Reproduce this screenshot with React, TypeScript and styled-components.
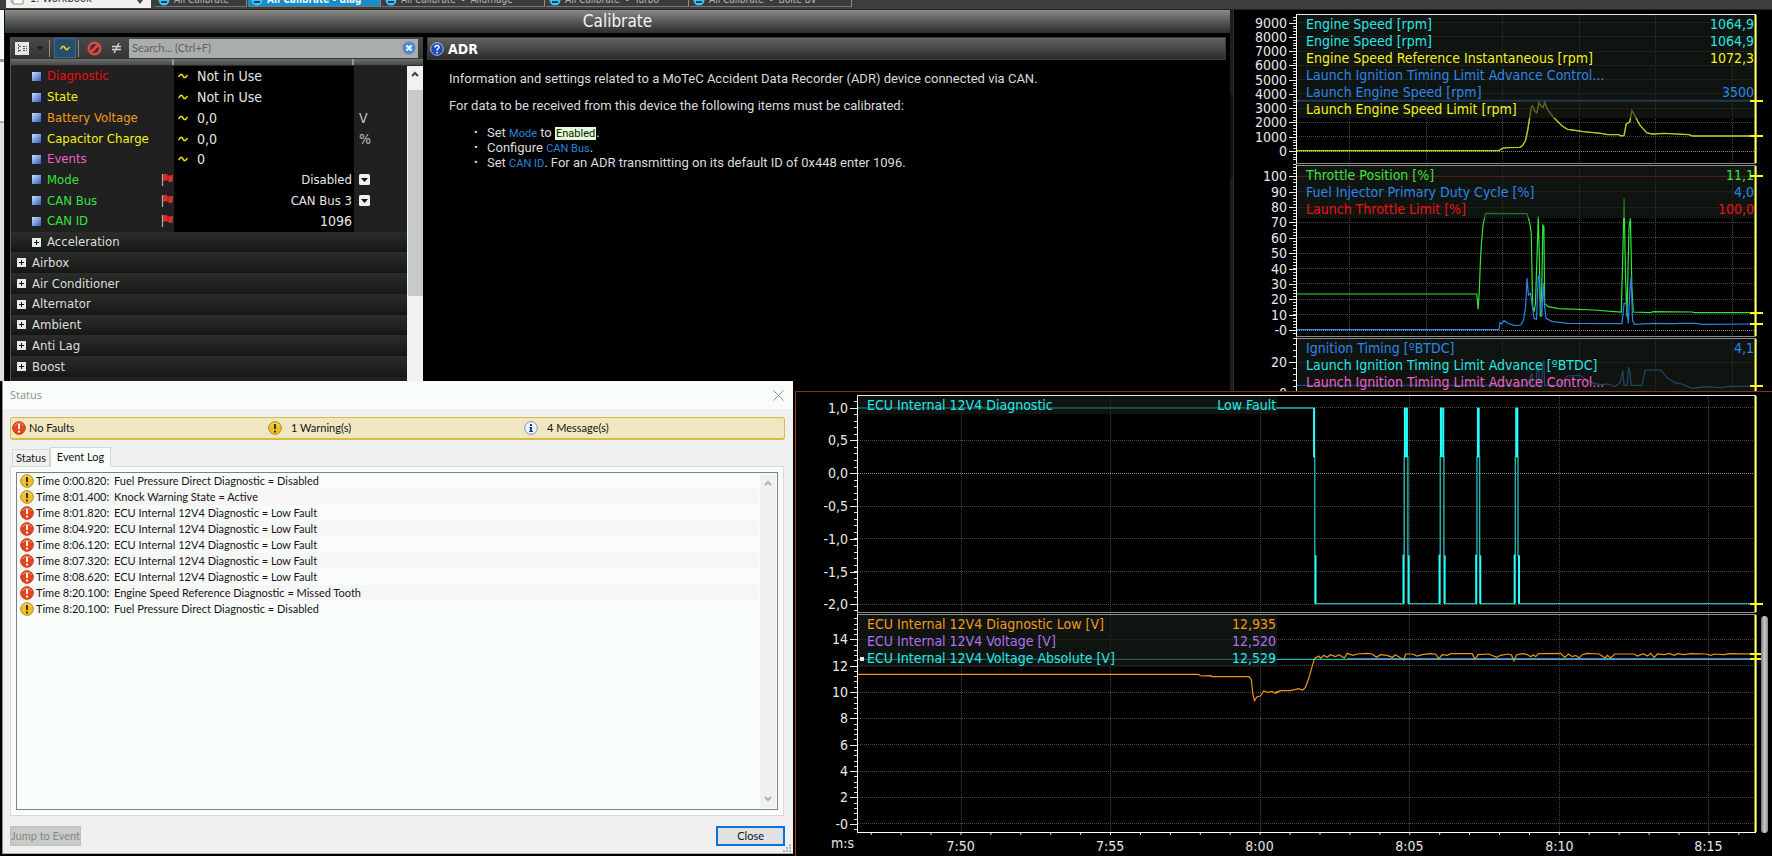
import React from "react";
import styled, { createGlobalStyle } from "styled-components";

const UI = '"DejaVu Sans Condensed", "DejaVu Sans", sans-serif';
const HELP = 'Roboto, "Liberation Sans", Arial, sans-serif';
const DIALOG = 'Lato, "Liberation Sans", sans-serif';

const GlobalStyle = createGlobalStyle`
  * { box-sizing: border-box; }
  body { margin: 0; background: #000; overflow: hidden; }
  button, input, select { font: inherit; color: inherit; margin: 0; padding: 0; border: 0; background: none; }
`;

const C = {
  cyan: "#27e6e6",
  yellow: "#f2f21c",
  blue: "#2b86e6",
  green: "#35e43c",
  red: "#f20d0d",
  pink: "#ee5fc8",
  orange: "#f09a1c",
  purple: "#b070f0",
  paper: "#f8fdf9",
};

/* ---------- shell ---------- */

const Desktop = styled.div`
  position: relative;
  display: flex;
  flex-direction: column;
  min-height: 100vh;
  background: #000;
  font: 14px/20px ${UI};
  color: #e4e6e4;
`;

const TabStrip = styled.nav`
  display: flex;
  height: 9px;
  flex: none;
  overflow: hidden;
  padding-left: 6px;
  gap: 1px;
  background: #3e3e3e;
`;

const WorkbookTab = styled.button`
  display: flex;
  align-items: flex-end;
  gap: 6px;
  width: 145px;
  height: 8px;
  margin-right: 3px;
  padding: 0 8px 3px 4px;
  background: #f0f0f0;
  color: #333;
  font: 11px/12px ${UI};
  span { flex: 1; text-align: left; }
`;

const SheetTab = styled.button<{ $w: number; $active?: boolean }>`
  display: flex;
  align-items: flex-end;
  gap: 4px;
  width: ${(p) => p.$w}px;
  height: 7px;
  padding: 0 0 0 3px;
  border-right: 1px solid #8a8c8a;
  border-bottom: 1px solid #777;
  background: ${(p) => (p.$active ? "#1a8cc6" : "#3a3c3a")};
  color: ${(p) => (p.$active ? "#e8f6ff" : "#b4b6b4")};
  font: ${(p) => (p.$active ? "bold" : "normal")} 10px/12px ${UI};
  white-space: pre;
  svg { flex: none; }
`;

const Workspace = styled.div`
  display: flex;
  height: 382px;
  border-top: 1px solid #222;
`;

const CalibrateWindow = styled.main`
  flex: 1230 1 0;
  min-width: 0;
  display: grid;
  grid-template-columns: 5px 1fr;
`;

const EdgeStrip = styled.div`
  background: linear-gradient(#f4faf6 0 49px, #999 49px 52px, #f4faf6 52px 111px, #aaa 111px 113px, #dcdcdc 113px);
  border-right: 1px solid #111;
  height: 371px;
`;

const WindowBody = styled.div`
  display: flex;
  flex-direction: column;
  min-width: 0;
`;

const WindowTitle = styled.h1`
  margin: 0 0 4px;
  height: 23px;
  text-align: center;
  font: 17px/23px ${UI};
  color: #f4f4f4;
  background: linear-gradient(#8a8b89, #5c5e5b 45%, #2c2e2c);
`;

const Panes = styled.div`
  display: flex;
  flex: 1;
  gap: 4px;
  padding: 0 4px 0 5px;
`;

const TreePane = styled.section`
  width: 413px;
  border-left: 1px solid #555;
  background: #202020;
`;

const Toolbar = styled.div`
  display: flex;
  align-items: center;
  height: 22px;
  background: linear-gradient(#474a48, #333634);
`;

const ToolButton = styled.button<{ $w: number; $on?: boolean }>`
  display: flex;
  align-items: center;
  justify-content: center;
  width: ${(p) => p.$w}px;
  height: 20px;
  border: ${(p) => (p.$on ? "1px solid #2d6da2" : "0")};
  background: ${(p) => (p.$on ? "#2a4d68" : "none")};
`;

const Divider = styled.i`
  width: 1px;
  height: 17px;
  margin: 0 4px 0 2px;
  background: #8b8e8b;
`;

const SearchBox = styled.label`
  display: flex;
  align-items: center;
  flex: 1;
  height: 19px;
  margin: 0 5px 0 2px;
  padding: 0 2px 0 3px;
  background: #aaaeaa;
  input {
    flex: 1;
    min-width: 0;
    font: 11px/18px ${DIALOG};
    outline: 0;
    &::placeholder { color: #5e625f; opacity: 1; }
  }
`;

const ColumnHeads = styled.div`
  display: grid;
  grid-template-columns: 163px 180px 1fr;
  height: 7px;
  background: linear-gradient(#6c6e6c, #484a48);
  border-bottom: 1px solid #2c2c2c;
  i { border-right: 2px solid #989a98; }
  i:last-child { border: 0; }
`;

const TreeBody = styled.div`
  display: flex;
  height: 315px;
`;

const TreeTable = styled.table`
  flex: 1;
  table-layout: fixed;
  height: 311px;
  border-spacing: 0;
  font-size: 13px;
  td { padding: 0; height: 20px; line-height: 20px; }
`;

const NameCell = styled.td<{ $color: string }>`
  color: ${(p) => p.$color};
  > div { display: flex; align-items: center; padding-left: 21px; gap: 6px; }
  > div > span { flex: 1; }
`;

const ValueCell = styled.td`
  background: #000;
  > div { display: flex; align-items: center; gap: 9px; padding: 0 2px 0 4px; }
  > div > span, select { flex: 1; }
  select {
    appearance: none;
    text-align-last: right;
    line-height: 20px;
    height: 20px;
    option { color: #000; }
  }
`;

const LiveValue = styled.span`
  font-size: 14px;
`;

const RightText = styled.span`
  text-align: right;
  font-size: 14px;
`;

const UnitCell = styled.td`
  padding-left: 5px !important;
  color: #c4c6c4;
  font-size: 14px;
  svg { display: block; }
`;

const GroupCell = styled.td<{ $nested?: boolean }>`
  background: linear-gradient(#2b2d2b, #202220 55%, #141714);
  > button {
    display: flex;
    align-items: center;
    gap: 6px;
    padding-left: ${(p) => (p.$nested ? 21 : 6)}px;
    color: #dcdedc;
  }
`;

const ScrollTrack = styled.div`
  display: flex;
  flex-direction: column;
  width: 16px;
  background: #f0f1f0;
  svg { display: block; margin: 5px auto 13px; }
  i { height: 206px; background: #c7cbc8; margin-left: 1px; }
`;

const HelpPane = styled.section`
  flex: 1;
  min-width: 0;
  font: 13px/15px ${HELP};
  color: #dadcda;
`;

const HelpHead = styled.h2`
  display: flex;
  align-items: center;
  gap: 4px;
  height: 23px;
  margin: 0 0 11px;
  padding-left: 2px;
  font: bold 14px/22px ${UI};
  color: #fff;
  background: linear-gradient(#60625f, #464846 50%, #2a2c2a);
  border: 1px solid #3a3a3a;
`;

const HelpText = styled.div`
  padding-left: 22px;
  p { margin: 0 0 12px; }
  ul { margin: 0; padding-left: 38px; list-style: none; }
  li { position: relative; height: 15px; white-space: nowrap; }
  li::before { content: "•"; position: absolute; left: -13px; font-size: 11px; }
  a { color: #2a86dc; font-size: 11px; line-height: 12px; text-decoration: none; }
  mark { background: #e2fcd4; color: #111; font-size: 11px; line-height: 12px; padding: 0 1px; }
`;

const Splitter = styled.div`
  width: 4px;
  background: linear-gradient(#1c1e1c 0 84px, #111 84px 169px, #1c1e1c 169px);
  border-right: 1px solid #2c2e2c;
`;

/* ---------- graphs ---------- */

const UpperGraphs = styled.section`
  flex: 538 1 0;
  min-width: 0;
  padding-top: 4px;
`;

const PanelRow = styled.div<{ $axis: number; $h: number }>`
  display: grid;
  grid-template-columns: ${(p) => p.$axis}px minmax(0, 1fr) 16px;
  grid-template-rows: minmax(0, 1fr);
  height: ${(p) => p.$h}px;
`;

const AxisSvg = styled.svg`
  display: block;
  width: 100%;
  height: 100%;
  text { font: 14px ${UI}; fill: #e6e8e6; text-anchor: end; }
`;

const Plot = styled.div<{ $first?: boolean; $last?: boolean }>`
  position: relative;
  min-height: 0;
  border-left: 1px solid #fff;
  border-top: ${(p) => (p.$first ? "1px solid #e8e8e8" : "3px double #8c8e8c")};
  border-bottom: ${(p) => (p.$last ? "1px solid #fff" : "0")};
`;

const TraceSvg = styled.svg`
  display: block;
  width: 100%;
  height: 100%;
  * { vector-effect: non-scaling-stroke; fill: none; }
`;

const Legend = styled.div<{ $w: string }>`
  position: absolute;
  top: 0;
  left: 1px;
  width: ${(p) => p.$w};
  padding: 0 1px 1px 8px;
  background: rgba(27, 33, 29, 0.6);
`;

const LegendRow = styled.div<{ $color: string }>`
  display: flex;
  justify-content: space-between;
  height: 17px;
  line-height: 18px;
  white-space: nowrap;
  color: ${(p) => p.$color};
`;

const Cursor = styled.i`
  position: absolute;
  top: 0;
  bottom: 0;
  right: -1px;
  width: 3px;
  background: linear-gradient(90deg, #8c8c14 0 1px, #ffff8c 1px 2px, #a0a050 2px);
`;

const LevelMarks = styled.svg`
  position: absolute;
  top: 0;
  right: -7px;
  width: 13px;
  height: 100%;
`;

const Selected = styled.i`
  position: absolute;
  left: 2px;
  top: 42px;
  width: 4px;
  height: 4px;
  background: #e8e8e8;
`;

interface Trace { color: string; d: string; w?: number }
interface PanelProps {
  axis: number;
  h: number;
  /* source window of the traces: x, y, width, height */
  box: [number, number, number, number];
  gridX: number[];
  ticks: [string, number][];
  minor: number;
  zero?: number;
  traces: Trace[];
  legend: [string, string, string][];
  legendW?: string;
  marks?: number[];
  first?: boolean;
  last?: boolean;
  selected?: boolean;
}

function Panel(p: PanelProps) {
  const [bx, by, bw, bh] = p.box;
  const top = p.first ? 1 : 3;
  const toPx = (y: number) => (y - by) / 3 + top;
  const ys = p.ticks.map((t) => toPx(t[1]));
  const minors: number[] = [];
  for (let y = ys[0]; y > 1; y -= p.minor) minors.push(y);
  for (let y = ys[0] + p.minor; y < p.h - 1; y += p.minor) minors.push(y);
  return (
    <PanelRow $axis={p.axis} $h={p.h}>
      <AxisSvg>
        {minors.map((y, i) => (
          <rect key={i} x={p.axis - 3} y={Math.round(y)} width={3} height={1} fill="#d8d8d8" />
        ))}
        {p.ticks.map(([label], i) => (
          <g key={i}>
            <rect x={p.axis - 7} y={Math.round(ys[i])} width={7} height={1} fill="#e8e8e8" />
            <text x={p.axis - 9} y={Math.round(ys[i]) + 5}>{label}</text>
          </g>
        ))}
      </AxisSvg>
      <Plot $first={p.first} $last={p.last}>
        <TraceSvg viewBox={`${bx} ${by} ${bw} ${bh}`} preserveAspectRatio="none">
          <g stroke="#454745" strokeDasharray="1 1" shapeRendering="crispEdges">
            {p.gridX.map((x) => <line key={x} x1={x} x2={x} y1={by} y2={by + bh} />)}
            {p.ticks.map(([, y]) => (
              <line key={y} x1={bx} x2={bx + bw} y1={y} y2={y} stroke={y === p.zero ? "#8c8e8c" : undefined} />
            ))}
          </g>
          {p.traces.map((t, i) => (
            <polyline key={i} points={t.d} stroke={t.color} strokeWidth={t.w ?? 1} />
          ))}
        </TraceSvg>
        <Legend $w={p.legendW ?? "calc(100% - 2px)"}>
          {p.legend.map(([name, value, color], i) => (
            <LegendRow key={i} $color={color}><span>{name}</span><span>{value}</span></LegendRow>
          ))}
        </Legend>
        {p.selected && <Selected />}
        <Cursor />
        <LevelMarks>
          {p.marks?.map((y) => (
            <rect key={y} y={Math.round((y - by) / 3) - 1} width={13} height={2} fill="#ffff10" />
          ))}
        </LevelMarks>
      </Plot>
    </PanelRow>
  );
}

const UX = [366, 584, 799, 1019, 1235, 1453];
const LX = [544, 992, 1439, 1888, 2337, 2783];
const scale = (labels: string[], y0: number, y1: number): [string, number][] =>
  labels.map((l, i) => [l, y0 + ((y1 - y0) * i) / (labels.length - 1)]);

const RPM = "216,452 790,452 800,445 812,443 850,442 858,436 866,420 872,390 878,350 882,322 886,318 892,334 898,338 904,308 910,318 916,322 920,306 928,328 945,352 970,378 985,388 1000,390 1030,395 1080,400 1100,404 1130,404 1138,408 1146,406 1152,372 1162,366 1168,332 1176,346 1190,374 1210,398 1225,402 1260,400 1330,404 1340,408 1521,408";
const THROTTLE = "216,402 727,402 731,448 734,400 737,315 740,255 745,195 752,160 870,161 878,190 882,220 884,330 886,440 890,455 894,430 898,300 902,168 905,290 908,470 912,380 915,195 918,200 920,430 930,440 960,446 1060,450 1110,454 1138,456 1142,300 1146,115 1150,350 1154,470 1160,200 1164,175 1168,380 1172,456 1220,458 1230,455 1340,456 1345,458 1521,458";
const DUTY = "216,509 790,509 793,488 797,492 805,482 815,490 835,497 852,495 860,480 866,440 870,355 874,405 880,400 884,430 890,475 897,478 902,350 905,345 908,440 912,470 916,370 920,440 924,475 940,484 985,490 1140,491 1146,430 1152,430 1158,490 1162,400 1166,350 1170,480 1175,493 1230,490 1290,491 1310,490 1350,490 1370,493 1521,492";
const IGNITION = "216,676 870,676 880,650 884,640 886,676 896,676 898,625 903,620 905,676 912,676 914,610 918,605 920,676 960,676 985,648 1020,646 1040,660 1060,670 1080,674 1100,672 1120,680 1135,668 1142,632 1146,676 1155,676 1159,622 1163,640 1166,676 1196,676 1206,630 1250,630 1270,655 1290,668 1310,672 1340,685 1380,680 1420,683 1450,679 1521,679";
const DIAG_LOW_A = "234,883 1254,883 1262,888 1292,887 1294,890 1406,890 1413,900 1417,940 1422,962 1430,950 1440,948 1450,933 1462,937 1475,934 1485,940 1498,934";
const DIAG_LOW_B: [number, number][] = [[14,938],[30,932],[60,932],[85,926],[97,930],[105,922],[115,895],[125,860],[132,836],[145,828],[150,835],[160,826],[170,832],[180,824],[195,830],[205,824],[222,834],[230,820],[248,826],[260,822],[290,820],[305,822],[318,832],[330,824],[350,826],[365,832],[375,824],[390,834],[400,840],[405,822],[425,822],[440,828],[455,824],[478,821],[495,822],[505,836],[515,824],[530,826],[540,821],[605,821],[613,838],[622,824],[655,822],[678,832],[690,826],[712,822],[722,824],[730,842],[738,824],[755,821],[768,823],[780,830],[788,824],[795,830],[803,821],[870,820],[882,832],[893,822],[905,830],[915,826],[925,834],[935,824],[948,820],[985,822],[1003,834],[1010,826],[1020,834],[1032,822],[1090,822],[1100,828],[1118,821],[1130,828],[1140,820],[1150,832],[1160,822],[1180,824],[1195,820],[1210,826],[1220,821],[1240,824],[1260,821],[1305,822],[1320,826],[1330,822],[1360,824],[1375,821],[1455,822]];
const DIAG_LOW = DIAG_LOW_A + " " + DIAG_LOW_B.map(([x, y]) => `${x + 1470},${y}`).join(" ");

/* Fault line: drops once, then four short pulses back to 1,0. */
const PULSES = [
  [1869, 1871, 1873, 1879, 1882, 1884],
  [1977, 1979, 1981, 1988, 1990, 1992],
  [2087, 2089, 2092, 2094, 2097, 2099],
  [2202, 2204, 2207, 2210, 2212, 2215],
];
const FAULT = "234,84 1601,84 1601,231 1603,231 1603,527 1605,527 1605,671 " +
  PULSES.map(([a, b, c, d, e, f]) =>
    `${a},671 ${a},525 ${b},525 ${b},231 ${c},231 ${c},84 ${d},84 ${d},231 ${e},231 ${e},527 ${f},527 ${f},671`).join(" ") +
  " 2925,671";
const FAULT_BRIGHT = ["1601,84 1601,231", "1605,527 1605,671"].concat(
  PULSES.flatMap(([a, , c, d, , f]) => [`${a},525 ${a},671`, `${c},84 ${c},231`, `${d},84 ${d},231`, `${f},527 ${f},671`])
);

/* ---------- lower windows ---------- */

const LowerLayer = styled.div`
  position: absolute;
  top: 381px;
  left: 0;
  right: 0;
  bottom: 0;
  display: flex;
  align-items: flex-start;
  gap: 2px;
  padding-left: 2px;
`;

const GraphWindow = styled.section`
  flex: 977 1 0;
  min-width: 0;
  align-self: stretch;
  margin-top: 10px;
  padding-top: 3px;
  background: #000;
  border-left: 1px solid #a2400f;
  border-top: 1px solid #8a340a;
  position: relative;
`;

const GraphScroll = styled.i`
  position: absolute;
  right: 4px;
  top: 224px;
  width: 7px;
  height: 217px;
  border-radius: 4px;
  background: linear-gradient(90deg, #777, #c8cac8 50%, #888);
`;

const TimeAxis = styled.div`
  display: grid;
  grid-template-columns: 61px minmax(0, 1fr) 16px;
  height: 23px;
  span { padding: 0 3px 0 0; text-align: right; line-height: 20px; }
  svg { display: block; width: 100%; height: 23px; overflow: visible; }
  text { font: 14px ${UI}; fill: #e6e8e6; text-anchor: middle; }
`;

const Dialog = styled.section`
  flex: 791 1 0;
  min-width: 0;
  display: flex;
  flex-direction: column;
  height: 473px;
  background: #f0f0f0;
  border-left: 1px solid #8c8c8c;
  border-bottom: 1px solid #aaa;
  color: #151515;
  font: 11px/16px ${DIALOG};
  position: relative;
`;

const DialogTitle = styled.header`
  display: flex;
  align-items: center;
  justify-content: space-between;
  height: 28px;
  padding: 0 9px 0 7px;
  background: ${C.paper};
  color: #8d918e;
  h2 { margin: 0; font: 11px/26px "Open Sans", sans-serif; }
  button { display: flex; }
`;

const Banner = styled.div`
  display: grid;
  grid-template-columns: 256px 256px 1fr;
  align-items: center;
  height: 23px;
  margin: 8px 8px 7px 7px;
  padding-left: 1px;
  background: #f0e7c0;
  border: 1px solid #d9b94a;
  border-bottom-width: 2px;
  border-radius: 3px;
  div { display: flex; align-items: center; gap: 3px; }
  div + div { gap: 9px; }
`;

const Tabs = styled.div`
  display: flex;
  align-items: flex-end;
  height: 20px;
  margin-bottom: -1px;
  padding-left: 9px;
  position: relative;
`;

const Tab = styled.button<{ $active?: boolean }>`
  height: ${(p) => (p.$active ? 20 : 18)}px;
  width: ${(p) => (p.$active ? 61 : 38)}px;
  border: 1px solid #d5d8d5;
  border-bottom-color: ${(p) => (p.$active ? C.paper : "#d5d8d5")};
  background: ${(p) => (p.$active ? C.paper : "#f0f0f0")};
  white-space: nowrap;
`;

const TabPage = styled.div`
  height: 350px;
  margin: 0 9px 0 7px;
  padding: 5px;
  border: 1px solid #d5d8d5;
  background: ${C.paper};
`;

const LogBox = styled.div`
  display: flex;
  height: 338px;
  border: 1px solid #7c8088;
  background: ${C.paper};
`;

const LogTable = styled.table`
  flex: 1;
  align-self: flex-start;
  border-spacing: 0;
  table-layout: fixed;
  td { padding: 0; height: 16px; line-height: 16px; white-space: nowrap; }
  tr:nth-child(even) { background: #f7f6f7; }
  svg { display: block; margin-left: 3px; }
`;

const LogScroll = styled.div`
  display: flex;
  flex-direction: column;
  justify-content: space-between;
  align-items: center;
  width: 16px;
  margin: 1px;
  padding: 6px 0;
  background: #f0f0f0;
`;

const DialogFooter = styled.footer`
  display: flex;
  justify-content: space-between;
  margin: 10px 8px 0 7px;
`;

const FooterButton = styled.button<{ $w: number }>`
  width: ${(p) => p.$w}px;
  height: 20px;
  background: #e1e1e1;
  border: 2px solid #0a74d4;
  white-space: nowrap;
  &:disabled { background: #c7cac7; border: 1px solid #bdc0bd; color: #858885; }
`;

const Grip = styled.svg`
  position: absolute;
  right: 2px;
  bottom: 1px;
`;

/* ---------- icons ---------- */

const StatusIcon = ({ kind }: { kind: "fault" | "warn" | "info" }) => {
  const fill = kind === "fault" ? "#e8441c" : kind === "warn" ? "#f0c020" : "#eef4fb";
  const ring = kind === "fault" ? "#b5401e" : kind === "warn" ? "#a88c20" : "#7f97b8";
  const ink = kind === "fault" ? "#fff" : kind === "warn" ? "#333" : "#1c3c94";
  return (
    <svg width="14" height="14" viewBox="0 0 14 14" aria-hidden="true">
      <circle cx="7" cy="7" r="6.3" fill={fill} stroke={ring} />
      <path d="M2.5 5 A5 5 0 0 1 11.500 5" fill="none" stroke="#fff" strokeOpacity=".4" />
      {kind === "info"
        ? <path d="M6 3h2v2H6zM5.500 6H8v4h1v1H5v-1h1V7h-.5z" fill={ink} />
        : <path d="M6 3h2v5H6zM6 9.500h2v2H6z" fill={ink} />}
    </svg>
  );
};

const Wave = () => (
  <svg width="10" height="8" viewBox="0 0 10 8" aria-hidden="true">
    <path d="M.5 5 2.500 2.500 4 2.500 6 5.500 7.500 5.500 9.500 3" fill="none" stroke="#f0e010" strokeWidth="1.4" />
  </svg>
);

const Cube = () => (
  <svg width="9" height="9" aria-hidden="true">
    <defs><linearGradient id="cube" x2="1" y2="1"><stop stopColor="#cfe0ff" /><stop offset="1" stopColor="#2a5cc0" /></linearGradient></defs>
    <rect width="9" height="9" fill="url(#cube)" />
  </svg>
);

const Plus = () => (
  <svg width="9" height="9" aria-hidden="true">
    <rect width="9" height="9" fill="#e6eaee" /><path d="M2 4.500h5M4.500 2v5" stroke="#111" />
  </svg>
);

const Flag = () => (
  <svg width="13" height="14" viewBox="0 0 13 14" aria-hidden="true">
    <path d="M1.500 1v12" stroke="#aaa" strokeWidth="1.200" />
    <path d="M2 1.500c2-1.500 3.500-.5 5 .5 1.500 1 3 .5 5-.5l-.5 7c-2 1-3 .5-4.500-.5S4 7 2 8.500z" fill="#d83028" />
    <path d="M7 2v6" stroke="#a01c18" strokeWidth="1" />
  </svg>
);

const Drop = () => (
  <svg width="11" height="11" aria-hidden="true">
    <rect width="11" height="11" rx="1.500" fill="#ecefec" /><path d="M2 4h7L5.500 8z" fill="#111" />
  </svg>
);

const Sheet = () => (
  <svg width="12" height="12" aria-hidden="true"><circle cx="6" cy="6" r="5.500" fill="#3fc4ee" /><path d="M3 8h6" stroke="#114" strokeWidth="1.500" /></svg>
);

const Chevron = ({ up, color, w = 2 }: { up?: boolean; color: string; w?: number }) => (
  <svg width="8" height="6" viewBox="0 0 8 6" aria-hidden="true">
    <path d={up ? "M1 5 4 2 7 5" : "M1 1 4 4 7 1"} fill="none" stroke={color} strokeWidth={w} />
  </svg>
);

/* ---------- data ---------- */

const LIVE = [
  ["Diagnostic", C.red, "Not in Use", ""],
  ["State", C.yellow, "Not in Use", ""],
  ["Battery Voltage", C.orange, "0,0", "V"],
  ["Capacitor Charge", C.yellow, "0,0", "%"],
  ["Events", C.pink, "0", ""],
];
const GROUPS = ["Acceleration", "Airbox", "Air Conditioner", "Alternator", "Ambient", "Anti Lag", "Boost"];
const LOW = "ECU Internal 12V4 Diagnostic = Low Fault";
const EVENTS: ["warn" | "fault", string, string][] = [
  ["warn", "0:00.820", "Fuel Pressure Direct Diagnostic = Disabled"],
  ["warn", "8:01.400", "Knock Warning State = Active"],
  ["fault", "8:01.820", LOW],
  ["fault", "8:04.920", LOW],
  ["fault", "8:06.120", LOW],
  ["fault", "8:07.320", LOW],
  ["fault", "8:08.620", LOW],
  ["fault", "8:20.100", "Engine Speed Reference Diagnostic = Missed Tooth"],
  ["warn", "8:20.100", "Fuel Pressure Direct Diagnostic = Disabled"],
];
const TIMES = ["7:50", "7:55", "8:00", "8:05", "8:10", "8:15"];
const pct = (x: number) => `${((x - 234) / 2691) * 100}%`;

function SettingName({ name }: { name: string }) {
  return <NameCell $color={C.green}><div><Cube /><span>{name}</span><Flag /></div></NameCell>;
}

function Tree() {
  return (
    <TreeTable>
      <colgroup><col width={163} /><col width={180} /><col /></colgroup>
      <tbody>
        {LIVE.map(([name, color, value, unit]) => (
          <tr key={name}>
            <NameCell $color={color}><div><Cube /><span>{name}</span></div></NameCell>
            <ValueCell><div><Wave /><LiveValue>{value}</LiveValue></div></ValueCell>
            <UnitCell>{unit}</UnitCell>
          </tr>
        ))}
        {[["Mode", "Disabled"], ["CAN Bus", "CAN Bus 3"]].map(([name, value]) => (
          <tr key={name}>
            <SettingName name={name} />
            <ValueCell><div><select aria-label={name}><option>{value}</option></select></div></ValueCell>
            <UnitCell><Drop /></UnitCell>
          </tr>
        ))}
        <tr>
          <SettingName name="CAN ID" />
          <ValueCell><div><RightText>1096</RightText></div></ValueCell>
          <UnitCell />
        </tr>
        {GROUPS.map((g, i) => (
          <tr key={g}><GroupCell colSpan={3} $nested={i === 0}><button><Plus />{g}</button></GroupCell></tr>
        ))}
      </tbody>
    </TreeTable>
  );
}

export default function App() {
  return (
    <Desktop>
      <GlobalStyle />
      <TabStrip>
        <WorkbookTab>
          <svg width="14" height="14" aria-hidden="true"><path d="M3 0h10v13H3z" fill="#fff" stroke="#a08a70" /><path d="M1 3v8h2" fill="none" stroke="#a08a70" /></svg>
          <span>1. Workbook</span>
          <svg width="6" height="6" aria-hidden="true"><path d="M0 1h6L3 5z" fill="#444" /></svg>
        </WorkbookTab>
        <SheetTab $w={92}><Sheet />All Calibrate</SheetTab>
        <SheetTab $w={133} $active><Sheet />All Calibrate - diag</SheetTab>
        <SheetTab $w={163}><Sheet />{"All Calibrate  -  Allumage"}</SheetTab>
        <SheetTab $w={143}><Sheet />{"All Calibrate  -  Turbo"}</SheetTab>
        <SheetTab $w={162}><Sheet />{"All Calibrate  -  Boite BV"}</SheetTab>
      </TabStrip>

      <Workspace>
        <CalibrateWindow>
          <EdgeStrip />
          <WindowBody>
            <WindowTitle>Calibrate</WindowTitle>
            <Panes>
              <TreePane>
                <Toolbar>
                  <ToolButton $w={22} aria-label="View">
                    <svg width="14" height="13"><rect width="14" height="13" fill="#e4e8e4" /><path d="M3.500 2v9M4 4.500h3M4 8.500h3M8 4.500h4M8 6.500h4M8 8.500h4" stroke="#555" strokeDasharray="2 1" /></svg>
                  </ToolButton>
                  <ToolButton $w={14} aria-label="View options"><svg width="8" height="5"><path d="M0 0h8L4 5z" fill="#222" /></svg></ToolButton>
                  <Divider />
                  <ToolButton $w={22} $on aria-label="Live values"><Wave /></ToolButton>
                  <Divider />
                  <ToolButton $w={22} aria-label="Exclude">
                    <svg width="15" height="15"><circle cx="7.500" cy="7.500" r="5.800" fill="#4a3030" stroke="#dd4b40" strokeWidth="2.500" /><path d="M11.500 3.500 3.500 11.500" stroke="#dd4b40" strokeWidth="2.500" /></svg>
                  </ToolButton>
                  <ToolButton $w={22} aria-label="Not equal">
                    <svg width="9" height="10"><path d="M0 3.500h9M0 6.500h9M7 0 2 10" stroke="#d4d6d4" strokeWidth="1.300" /></svg>
                  </ToolButton>
                  <SearchBox>
                    <input type="search" placeholder="Search... (Ctrl+F)" aria-label="Search" />
                    <svg width="14" height="14"><circle cx="7" cy="7" r="6.500" fill="#4c8ad8" /><path d="M4.500 4.500l5 5M9.500 4.500l-5 5" stroke="#fff" strokeWidth="2" /></svg>
                  </SearchBox>
                </Toolbar>
                <ColumnHeads><i /><i /><i /></ColumnHeads>
                <TreeBody>
                  <Tree />
                  <ScrollTrack><Chevron up color="#444" /><i /></ScrollTrack>
                </TreeBody>
              </TreePane>

              <HelpPane>
                <HelpHead>
                  <svg width="14" height="14" viewBox="0 0 14 14" aria-hidden="true">
                    <circle cx="7" cy="7" r="6.300" fill="#1c4cc0" stroke="#a8bce8" />
                    <path d="M5 5.500C5 3 9 3 9 5.200 9 6.800 7 6.800 7 8.500M7 9.800v1.400" fill="none" stroke="#fff" strokeWidth="1.500" />
                  </svg>
                  ADR
                </HelpHead>
                <HelpText>
                  <p>Information and settings related to a MoTeC Accident Data Recorder (ADR) device connected via CAN.</p>
                  <p>For data to be received from this device the following items must be calibrated:</p>
                  <ul>
                    <li>Set <a href="#mode">Mode</a> to <mark>Enabled</mark>.</li>
                    <li>Configure <a href="#can-bus">CAN Bus</a>.</li>
                    <li>Set <a href="#can-id">CAN ID</a>. For an ADR transmitting on its default ID of 0x448 enter 1096.</li>
                  </ul>
                </HelpText>
              </HelpPane>
            </Panes>
          </WindowBody>
        </CalibrateWindow>

        <Splitter />

        <UpperGraphs>
          <Panel
            axis={62} h={149} first box={[216, 45, 1305, 444]} gridX={UX} minor={2.85} zero={453}
            ticks={scale(["9000", "8000", "7000", "6000", "5000", "4000", "3000", "2000", "1000", "0"], 68, 453)}
            traces={[
              { color: "#23629f", d: "216,302 1521,302", w: 2 },
              { color: "#1aa8a0", d: RPM },
              { color: "#c4c410", d: RPM, w: 1.4 },
            ]}
            legend={[
              ["Engine Speed [rpm]", "1064,9", C.cyan],
              ["Engine Speed [rpm]", "1064,9", C.cyan],
              ["Engine Speed Reference Instantaneous [rpm]", "1072,3", C.yellow],
              ["Launch Ignition Timing Limit Advance Control...", "", C.blue],
              ["Launch Engine Speed [rpm]", "3500", C.blue],
              ["Launch Engine Speed Limit [rpm]", "", C.yellow],
            ]}
            marks={[302, 408]}
          />
          <Panel
            axis={62} h={173} box={[216, 18, 1305, 510]} gridX={UX} minor={3.07} zero={510}
            ticks={scale(["100", "90", "80", "70", "60", "50", "40", "30", "20", "10", "-0"], 49, 510)}
            traces={[
              { color: "#c01818", d: "216,49 1521,49" },
              { color: C.green, d: THROTTLE, w: 1.2 },
              { color: C.blue, d: DUTY, w: 1.2 },
            ]}
            legend={[
              ["Throttle Position [%]", "11,1", C.green],
              ["Fuel Injector Primary Duty Cycle [%]", "4,0", C.blue],
              ["Launch Throttle Limit [%]", "100,0", C.red],
            ]}
            marks={[49, 458, 492]}
          />
          <Panel
            axis={62} h={60} box={[216, 537, 1305, 171]} gridX={UX} minor={6}
            ticks={[["20", 607], ["0", 700]]}
            traces={[{ color: "#2f7fd4", d: IGNITION, w: 1.2 }]}
            legend={[
              ["Ignition Timing [ºBTDC]", "4,1", C.blue],
              ["Launch Ignition Timing Limit Advance [ºBTDC]", "", C.cyan],
              ["Launch Ignition Timing Limit Advance Control...", "", C.pink],
            ]}
            marks={[679]}
          />
        </UpperGraphs>
      </Workspace>

      <LowerLayer>
        <Dialog role="dialog" aria-label="Status">
          <DialogTitle>
            <h2>Status</h2>
            <button aria-label="Close dialog"><svg width="11" height="11"><path d="M.5.5l10 10M10.500.5l-10 10" stroke="#8a8e8b" /></svg></button>
          </DialogTitle>
          <Banner>
            <div><StatusIcon kind="fault" />No Faults</div>
            <div><StatusIcon kind="warn" />1 Warning(s)</div>
            <div><StatusIcon kind="info" />4 Message(s)</div>
          </Banner>
          <Tabs role="tablist">
            <Tab role="tab">Status</Tab>
            <Tab role="tab" $active aria-selected>Event Log</Tab>
          </Tabs>
          <TabPage role="tabpanel">
            <LogBox>
              <LogTable>
                <colgroup><col width={19} /><col width={78} /><col /></colgroup>
                <tbody>
                  {EVENTS.map(([kind, time, message], i) => (
                    <tr key={i}>
                      <td><StatusIcon kind={kind} /></td>
                      <td>Time {time}:</td>
                      <td>{message}</td>
                    </tr>
                  ))}
                </tbody>
              </LogTable>
              <LogScroll><Chevron up color="#b0b2b0" /><Chevron color="#b0b2b0" /></LogScroll>
            </LogBox>
          </TabPage>
          <DialogFooter>
            <FooterButton $w={71} disabled>Jump to Event</FooterButton>
            <FooterButton $w={69}>Close</FooterButton>
          </DialogFooter>
          <Grip width="8" height="8" aria-hidden="true">
            <path d="M6 0h2v2H6zM3 3h2v2H3zM6 3h2v2H6zM0 6h2v2H0zM3 6h2v2H3zM6 6h2v2H6z" fill="#b4b4b4" />
          </Grip>
        </Dialog>

        <GraphWindow>
          <Panel
            axis={61} h={217} first box={[234, 48, 2691, 648]} gridX={LX} minor={6.54} zero={279}
            ticks={[["1,0", 83], ["0,5", 180], ["0,0", 279], ["-0,5", 378], ["-1,0", 476], ["-1,5", 575], ["-2,0", 672]]}
            traces={[
              { color: "#20b4b0", d: FAULT, w: 1.4 },
              ...FAULT_BRIGHT.map((d) => ({ color: "#28ffff", d, w: 2 })),
            ]}
            legend={[["ECU Internal 12V4 Diagnostic", "Low Fault", C.cyan]]}
            legendW="418px"
            marks={[672]}
          />
          <Panel
            axis={61} h={221} last selected box={[234, 705, 2691, 651]} gridX={LX} minor={5.27}
            ticks={scale(["14", "12", "10", "8", "6", "4", "2", "-0"], 778, 1331)}
            traces={[
              { color: "#a060e0", d: "1700,836 2925,836" },
              { color: "#e8961c", d: DIAG_LOW, w: 1.2 },
              { color: "#22dede", d: "234,838 2925,838" },
            ]}
            legend={[
              ["ECU Internal 12V4 Diagnostic Low [V]", "12,935", C.orange],
              ["ECU Internal 12V4 Voltage [V]", "12,520", C.purple],
              ["ECU Internal 12V4 Voltage Absolute [V]", "12,529", C.cyan],
            ]}
            legendW="418px"
            marks={[822, 838]}
          />
          <TimeAxis>
            <span>m:s</span>
            <svg>
              {Array.from({ length: 30 }, (_, i) => 275 + i * 89.57).filter((x) => x < 2925).map((x) => (
                <rect key={x} x={pct(x)} width="1" height="2" fill="#ddd" />
              ))}
              {TIMES.map((t, i) => <text key={t} x={pct(LX[i])} y="18">{t}</text>)}
            </svg>
            <i />
          </TimeAxis>
          <GraphScroll />
        </GraphWindow>
      </LowerLayer>
    </Desktop>
  );
}
